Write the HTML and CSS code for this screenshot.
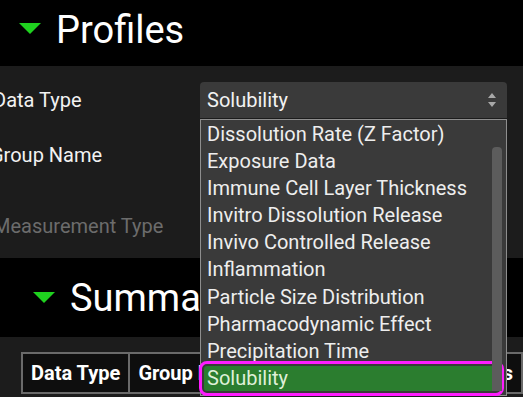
FILE: index.html
```html
<!DOCTYPE html>
<html>
<head>
<meta charset="utf-8">
<link rel="stylesheet" href="styles.css">
</head>
<body>
<div class="hdr">
  <span class="tri"></span>
  <h1>Profiles</h1>
</div>
<div class="form">
  <div class="row">
    <div class="label">Data Type</div>
    <div class="select">
      <span>Solubility</span>
      <svg class="arrows" width="10" height="16" viewBox="0 0 10 16"><path d="M1 6 L5 1 L9 6 Z M1 10 L5 15 L9 10 Z" fill="#a8a8a8"/></svg>
    </div>
  </div>
  <div class="row r2">
    <div class="label l2">Group Name</div>
  </div>
  <div class="row r3">
    <div class="label dis">Measurement Type</div>
  </div>
</div>
<div class="hdr hdr2">
  <span class="tri"></span>
  <h1>Summary</h1>
</div>
<div class="tablewrap">
  <table class="tbl">
    <tr>
      <th class="c1">Data Type</th>
      <th class="c2">Group Name</th>
      <th class="c3">Measurements</th>
    </tr>
  </table>
</div>
<div class="dropdown">
  <ul class="items">
    <li>Dissolution Rate (Z Factor)</li>
    <li>Exposure Data</li>
    <li>Immune Cell Layer Thickness</li>
    <li>Invitro Dissolution Release</li>
    <li>Invivo Controlled Release</li>
    <li>Inflammation</li>
    <li>Particle Size Distribution</li>
    <li>Pharmacodynamic Effect</li>
    <li>Precipitation Time</li>
    <li class="sel">Solubility</li>
  </ul>
  <div class="thumb"></div>
</div>
</body>
</html>
```
FILE: styles.css
```css
html, body {
  margin: 0;
  padding: 0;
}
body {
  background: #1c1c1c;
  font-family: Roboto, "Liberation Sans", sans-serif;
  width: 523px;
  height: 397px;
  overflow: hidden;
  position: relative;
}
.hdr {
  background: #000;
  height: 66px;
  display: flex;
  align-items: center;
  padding-left: 19px;
  gap: 15px;
}
.tri {
  width: 0;
  height: 0;
  border-left: 11px solid transparent;
  border-right: 11px solid transparent;
  border-top: 11px solid #1fd11f;
  margin-top: -10px;
}
.hdr h1 {
  margin: 0;
  font-size: 38px;
  font-weight: 400;
  color: #ffffff;
  line-height: 1;
  margin-top: -6px;
}
.form {
  height: 176px;
  padding-top: 16px;
}
.row {
  display: flex;
  align-items: center;
  height: 36px;
}
.r2 { margin-top: 19px; }
.r3 { margin-top: 35px; }
.label {
  width: 207px;
  margin-left: -7px;
  font-size: 20px;
  color: #f2f2f2;
}
.label.l2 { margin-left: -10px; }
.label.dis { color: #6c6c6c; margin-left: -7px; }
.select {
  width: 307px;
  height: 36px;
  box-sizing: border-box;
  background: #3a3a3a;
  border-radius: 4px 4px 0 0;
  display: flex;
  align-items: center;
  justify-content: space-between;
  padding: 0 10px 0 7px;
  font-size: 20px;
  color: #f2f2f2;
}
.hdr2 {
  height: 79px;
  padding-left: 33px;
  gap: 15px;
}
.hdr2 .tri { margin-top: 0; }
.hdr2 h1 { margin-top: 0; }
.tablewrap {
  padding: 15px 0 0 21px;
}
.tbl {
  border-collapse: collapse;
  white-space: nowrap;
}
.tbl th {
  border: 2px solid #6a6a6a;
  background: #0e0e0e;
  color: #ffffff;
  font-size: 20px;
  font-weight: 700;
  text-align: left;
  height: 38px;
  padding: 0 8px;
}
.c1 { width: 88px; }
.c2 { width: 230px; }
.dropdown {
  position: absolute;
  left: 200px;
  top: 119px;
  width: 305px;
  height: 275px;
  background: #3a3a3a;
  border: 1px solid #8e8e8e;
}
.items {
  list-style: none;
  margin: 0;
  padding: 1px 0 0 0;
}
.items li {
  height: 27.1px;
  line-height: 27px;
  font-size: 20px;
  color: #eeeeee;
  padding-left: 6px;
  white-space: nowrap;
}
.items li.sel {
  background: #2b7d2f;
  color: #dff0d8;
  margin: 0 7px 0 3px;
  padding-left: 3px;
  height: 25px;
  line-height: 25px;
  margin-top: 1px;
  outline: 3px solid #ff1cff;
  outline-offset: 2px;
  border-radius: 3px;
}
.thumb {
  position: absolute;
  left: 291px;
  top: 27px;
  width: 10px;
  height: 244px;
  background: #5c5c5c;
  border-radius: 4px 4px 0 0;
}
```
